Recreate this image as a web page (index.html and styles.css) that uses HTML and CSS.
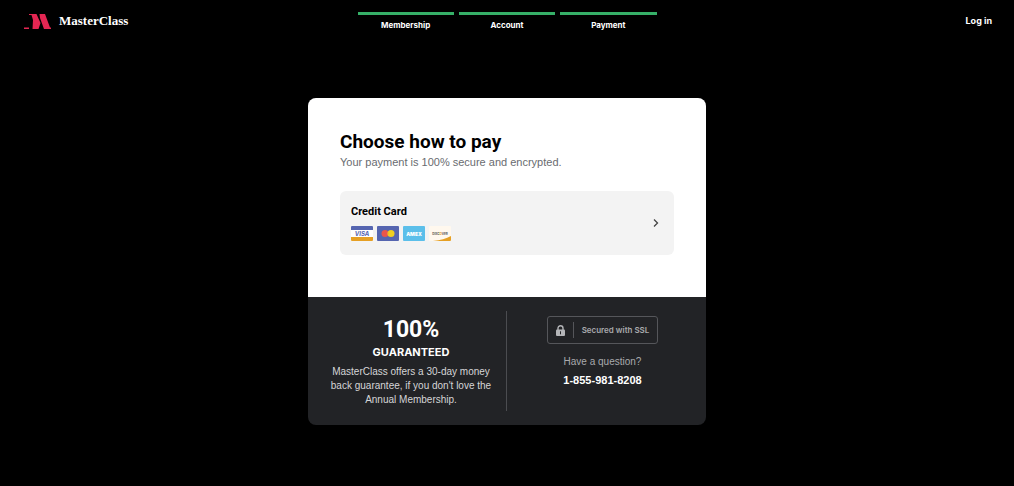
FILE: index.html
```html
<!DOCTYPE html>
<html lang="en">
<head>
    <meta charset="UTF-8">
    <meta name="viewport" content="width=device-width, initial-scale=1.0">
    <title>MasterClass - Payment</title>
    <link rel="stylesheet" href="styles.css">
</head>
<body>

    <!-- Header -->
    <header class="header">
        <a class="logo" href="#">
            <svg class="logo-mark" viewBox="0 0 27 15" width="27" height="15" aria-hidden="true">
                <path fill="#e32652" d="M0 13.500h5V15H0zM5 0h7.500l4 9-2 6H8.500L9 6 7.500 1H5zM15.500 0H21l5 13.500h1V15h-7L16 4z"/>
            </svg>
            <span class="logo-text">MasterClass</span>
        </a>
        <ol class="steps">
            <li class="step">Membership</li>
            <li class="step">Account</li>
            <li class="step">Payment</li>
        </ol>
        <a class="login" href="#">Log in</a>
    </header>

    <main class="card">
        <!-- Payment method -->
        <section class="payment">
            <h1 class="title">Choose how to pay</h1>
            <p class="subtitle">Your payment is 100% secure and encrypted.</p>
            <button class="method" type="button">
                <span class="method-info">
                    <span class="method-name">Credit Card</span>
                    <span class="brands">
                        <svg class="brand" viewBox="0 0 22 15" role="img" aria-label="Visa">
                            <rect width="22" height="15" rx="1" fill="#fff"/>
                            <path fill="#5565b0" d="M1 0h20a1 1 0 0 1 1 1v3H0V1a1 1 0 0 1 1-1z"/>
                            <path fill="#e6a024" d="M0 11h22v3a1 1 0 0 1-1 1H1a1 1 0 0 1-1-1z"/>
                            <text class="visa" x="11" y="10">VISA</text>
                        </svg>
                        <svg class="brand" viewBox="0 0 22 15" role="img" aria-label="Mastercard">
                            <rect width="22" height="15" rx="1" fill="#5565b0"/>
                            <circle cx="8" cy="7.5" r="3.5" fill="#ea564b"/>
                            <circle cx="14" cy="7.5" r="3.5" fill="#f0d020"/>
                            <path fill="#ef9a32" d="M11 5.7a3.500 3.500 0 0 1 0 3.600a3.500 3.500 0 0 1 0-3.600z"/>
                        </svg>
                        <svg class="brand" viewBox="0 0 22 15" role="img" aria-label="American Express">
                            <rect width="22" height="15" rx="1" fill="#5bbfea"/>
                            <text class="amex" x="11" y="10">AMEX</text>
                        </svg>
                        <svg class="brand" viewBox="0 0 22 15" role="img" aria-label="Discover">
                            <rect width="22" height="15" rx="1" fill="#fff8ee"/>
                            <path fill="#e6a024" d="M22 10v4a1 1 0 0 1-1 1H4q11-1 18-5z"/>
                            <text class="discover" x="11" y="9">DISC<tspan fill="#e6a024">O</tspan>VER</text>
                        </svg>
                    </span>
                </span>
                <svg class="chevron" viewBox="0 0 6 8" width="6" height="8" aria-hidden="true">
                    <path d="M1 .5L4.500 4 1 7.500" fill="none" stroke="#444" stroke-width="1.300"/>
                </svg>
            </button>
        </section>

        <!-- Guarantee and contact -->
        <footer class="assurance">
            <section class="guarantee">
                <h2 class="guarantee-title"><span class="percent">100%</span> <span class="guaranteed">GUARANTEED</span></h2>
                <p class="guarantee-text">MasterClass offers a 30-day money back guarantee, if you don't love the Annual Membership.</p>
            </section>
            <section class="contact">
                <div class="ssl">
                    <svg class="lock" viewBox="0 0 9 11" width="9" height="11" aria-hidden="true">
                        <path d="M2 5V3.200a2.500 2.500 0 0 1 5 0V5" fill="none" stroke="#b4b5b8" stroke-width="1.400"/>
                        <rect y="4.500" width="9" height="6.500" rx="1" fill="#b4b5b8"/>
                        <path d="M4.500 6.300v3" stroke="#222326"/>
                    </svg>
                    <span class="ssl-text">Secured with SSL</span>
                </div>
                <p class="question">Have a question?</p>
                <a class="phone" href="tel:18559818208">1-855-981-8208</a>
            </section>
        </footer>
    </main>

</body>
</html>
```
FILE: styles.css
```css
* {
    box-sizing: border-box;
}
body {
    margin: 0;
    background-color: #000;
    color: #fff;
    font-family: "Liberation Sans", Arial, sans-serif;
}
h1, h2, p, ol {
    margin: 0;
    padding: 0;
}
a {
    color: inherit;
    text-decoration: none;
}

/* Header */
.header {
    display: grid;
    grid-template-columns: 1fr 299px 1fr;
    align-items: start;
    padding: 12px 22px 0;
}
.logo {
    display: flex;
    align-items: center;
    gap: 8px;
    height: 18px;
    padding-left: 2px;
}
.logo-text {
    font-family: "Liberation Serif", "Times New Roman", serif;
    font-size: 13px;
    font-weight: bold;
}
.steps {
    display: grid;
    grid-template-columns: repeat(3, 1fr);
    gap: 5px;
    list-style: none;
}
.step {
    padding-top: 4px;
    border-top: 3px solid #36b068;
    font-family: Inter, sans-serif;
    font-size: 8px;
    font-weight: 700;
    line-height: 12px;
    text-align: center;
}
.login {
    justify-self: end;
    font-family: Inter, sans-serif;
    font-size: 9px;
    font-weight: 700;
    line-height: 18px;
}

/* Card */
.card {
    max-width: 398px;
    margin: 67px auto 0;
    border-radius: 8px;
    overflow: hidden;
    background-color: #222326;
    color: #000;
}
.payment {
    padding: 32px 32px 42px;
    background-color: #fff;
}
.title {
    font-family: Roboto, sans-serif;
    font-size: 19px;
    font-weight: 700;
    line-height: 24px;
}
.subtitle {
    color: #696b70;
    font-size: 11px;
    line-height: 16px;
}
.method {
    display: flex;
    align-items: center;
    justify-content: space-between;
    width: 100%;
    margin-top: 21px;
    padding: 13px 15px 14px 11px;
    border: none;
    border-radius: 6px;
    background-color: #f3f3f3;
    color: #000;
    font-family: inherit;
    text-align: left;
    cursor: pointer;
}
.method-name {
    display: block;
    font-family: Roboto, sans-serif;
    font-size: 11px;
    font-weight: 700;
    line-height: 16px;
}
.brands {
    display: flex;
    gap: 4px;
    margin-top: 6px;
}
.brand {
    width: 22px;
    height: 15px;
}
.brand text {
    font-family: Inter, sans-serif;
    font-weight: 700;
    text-anchor: middle;
}
.brand .visa {
    fill: #5565b0;
    font-size: 6px;
    font-style: italic;
}
.brand .amex {
    fill: #fff;
    font-size: 5px;
    font-weight: 900;
}
.brand .discover {
    fill: #555;
    font-size: 3px;
}

/* Guarantee and contact */
.assurance {
    display: grid;
    grid-template-columns: 1fr 1fr;
    padding: 14px 0;
    color: #fff;
    text-align: center;
}
.guarantee {
    padding: 4px 10px 4px 18px;
    border-right: 1px solid #4b4c50;
}
.percent {
    display: block;
    font-family: Roboto, sans-serif;
    font-size: 23px;
    font-weight: 700;
    line-height: 30px;
}
.guaranteed {
    display: block;
    font-family: Inter, sans-serif;
    font-size: 11px;
    font-weight: 700;
    line-height: 14px;
}
.guarantee-text {
    margin-top: 6px;
    color: #d5d5d7;
    font-size: 10px;
    line-height: 14px;
}
.contact {
    display: flex;
    flex-direction: column;
    align-items: center;
    padding: 5px 16px 5px 8px;
}
.ssl {
    display: flex;
    align-items: center;
    gap: 8px;
    padding: 5px 8px;
    border: 1px solid #55565a;
    border-radius: 3px;
    color: #a9aaad;
}
.ssl-text {
    padding-left: 8px;
    border-left: 1px solid #55565a;
    font-family: Inter, sans-serif;
    font-size: 8px;
    font-weight: 600;
    line-height: 16px;
}
.question {
    margin-top: 10px;
    color: #a9aaad;
    font-size: 10px;
    line-height: 16px;
}
.phone {
    margin-top: 2px;
    font-size: 11px;
    font-weight: 700;
    line-height: 16px;
}
```
